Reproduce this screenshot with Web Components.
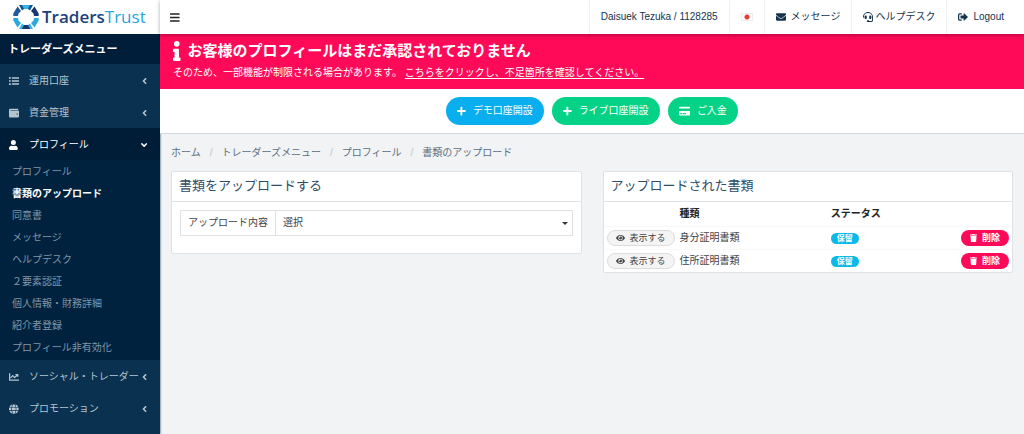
<!DOCTYPE html>
<html lang="ja">
<head>
<meta charset="utf-8">
<meta name="viewport" content="width=device-width, initial-scale=1">
<title>書類のアップロード | TradersTrust</title>
<style>
html, body { margin: 0; min-height: 100%; }
body {
  --navy: #14344f;
  --line: #dde3e7;
  --pink: #ff0a58;
  --green: #04d286;
  --blue: #08aeee;
  background: #f1f3f5;
  font: 10px/16px "Liberation Sans", "Noto Sans CJK JP", sans-serif;
  color: #3c4247;
}
</style>
</head>
<body>
<trader-app></trader-app>

<script>
const ICONS = {
  bars: [448, '<path d="M16 132h416a16 16 0 0 0 16-16V76a16 16 0 0 0-16-16H16A16 16 0 0 0 0 76v40a16 16 0 0 0 16 16zm0 160h416a16 16 0 0 0 16-16v-40a16 16 0 0 0-16-16H16a16 16 0 0 0-16 16v40a16 16 0 0 0 16 16zm0 160h416a16 16 0 0 0 16-16v-40a16 16 0 0 0-16-16H16a16 16 0 0 0-16 16v40a16 16 0 0 0 16 16z"/>'],
  list: [512, '<path d="M0 56h88v88H0zM0 212h88v88H0zM0 368h88v88H0zM144 64h368v72H144zM144 220h368v72H144zM144 376h368v72H144z"/>'],
  wallet: [512, '<path d="M461 128H80a16 16 0 0 1 0-32h384c9 0 16-7 16-16 0-26-22-48-48-48H64C29 32 0 61 0 96v320c0 35 29 64 64 64h397c28 0 51-22 51-48V176c0-26-23-48-51-48zm-45 208a32 32 0 1 1 0-64 32 32 0 0 1 0 64z"/>'],
  user: [448, '<path d="M224 256a128 128 0 1 0 0-256 128 128 0 0 0 0 256zm90 32h-17a174 174 0 0 1-146 0h-17C60 288 0 348 0 422v42c0 27 21 48 48 48h352c27 0 48-21 48-48v-42c0-74-60-134-134-134z"/>'],
  chart: [512, '<path d="M496 384H64V80a16 16 0 0 0-16-16H16A16 16 0 0 0 0 80v336c0 18 14 32 32 32h464a16 16 0 0 0 16-16v-32a16 16 0 0 0-16-16zM464 96H346c-22 0-32 26-17 41l32 32-73 73-73-73c-13-13-33-13-46 0l-96 96c-6 6-6 16 0 23l23 23c6 6 16 6 22 0l74-75 73 73c13 13 33 13 46 0l96-96 32 32c15 15 41 5 41-17V112a16 16 0 0 0-16-16z"/>'],
  globe: [496, '<path d="M336 160C322 66 287 8 248 8s-74 58-88 152zm-184 96c0 22 1 44 3 64h186a690 690 0 0 0 0-128H155c-2 20-3 42-3 64zm325-96A249 249 0 0 0 315 17c25 34 43 87 52 143zM181 17A248 248 0 0 0 19 160h110c9-56 27-109 52-143zm306 175H372a700 700 0 0 1 0 128h115a247 247 0 0 0 0-128zM120 256c0-22 1-43 4-64H9a249 249 0 0 0 0 128h115c-3-21-4-42-4-64zm40 96c14 94 49 152 88 152s74-58 88-152zm155 143a248 248 0 0 0 162-143H367c-9 56-27 109-52 143zM19 352a249 249 0 0 0 162 143c-25-34-43-87-52-143z"/>'],
  left: [256, '<path d="M32 239 168 103c9-9 24-9 34 0l22 23c10 9 10 24 0 34l-96 96 96 96c10 10 10 25 0 34l-22 23c-10 9-25 9-34 0L32 273c-10-9-10-24 0-34z"/>'],
  down: [320, '<path d="M143 352 7 217c-9-10-9-25 0-34l23-23c9-9 24-9 34 0l96 97 96-97c10-9 25-9 34 0l23 23c9 9 9 24 0 34L177 352c-9 10-24 10-34 0z"/>'],
  info: [192, '<path d="M20 424h20V280H20c-11 0-20-9-20-20v-44c0-11 9-20 20-20h112c11 0 20 9 20 20v208h20c11 0 20 9 20 20v48c0 11-9 20-20 20H20c-11 0-20-9-20-20v-48c0-11 9-20 20-20zM96 0a72 72 0 1 0 0 144A72 72 0 0 0 96 0z"/>'],
  plus: [448, '<path d="M416 208H272V64c0-18-14-32-32-32h-32c-18 0-32 14-32 32v144H32c-18 0-32 14-32 32v32c0 18 14 32 32 32h144v144c0 18 14 32 32 32h32c18 0 32-14 32-32V304h144c18 0 32-14 32-32v-32c0-18-14-32-32-32z"/>'],
  card: [576, '<path d="M0 432c0 27 22 48 48 48h480c27 0 48-21 48-48V256H0zm192-68c0-7 5-12 12-12h136c7 0 12 5 12 12v40c0 7-5 12-12 12H204c-7 0-12-5-12-12zm-128 0c0-7 5-12 12-12h72c7 0 12 5 12 12v40c0 7-5 12-12 12H76c-7 0-12-5-12-12zM576 80v48H0V80c0-26 22-48 48-48h480c27 0 48 22 48 48z"/>'],
  eye: [576, '<path d="M573 241C518 136 411 64 288 64S58 136 3 241a32 32 0 0 0 0 30c55 105 162 177 285 177s230-72 285-177a32 32 0 0 0 0-30zM288 400a144 144 0 1 1 0-288 144 144 0 0 1 0 288zm0-240a95 95 0 0 0-25 4 48 48 0 0 1-67 67 96 96 0 1 0 92-71z"/>'],
  trash: [448, '<path d="M432 32H312l-9-19a24 24 0 0 0-22-13H167a24 24 0 0 0-21 13l-10 19H16A16 16 0 0 0 0 48v32a16 16 0 0 0 16 16h416a16 16 0 0 0 16-16V48a16 16 0 0 0-16-16zM32 128h384l-21 339a48 48 0 0 1-48 45H101a48 48 0 0 1-48-45z"/>'],
  mail: [512, '<path d="M502 191c4-3 10 0 10 5v204c0 27-21 48-48 48H48c-26 0-48-21-48-48V196c0-5 6-8 10-5 22 17 52 40 155 114 21 16 57 48 91 48s71-33 92-48c102-75 132-97 154-114zM256 320c23 0 57-29 74-41 133-97 143-105 173-129 6-4 9-11 9-19V112c0-26-21-48-48-48H48c-26 0-48 22-48 48v19c0 8 3 15 9 19 31 24 41 32 174 129 16 12 50 41 73 41z"/>'],
  headset: [512, '<path d="M192 208c0-18-14-32-32-32h-16c-35 0-64 29-64 64v48c0 35 29 64 64 64h16c18 0 32-14 32-32zm176 144c35 0 64-29 64-64v-48c0-35-29-64-64-64h-16c-18 0-32 14-32 32v112c0 18 14 32 32 32zM256 0C113 0 5 119 0 256v16a16 16 0 0 0 16 16h16a16 16 0 0 0 16-16v-16a208 208 0 0 1 416 0v166c0 23-19 42-42 42H320c0-27-21-48-48-48h-32a48 48 0 1 0 0 96h182c50 0 90-40 90-90V256C507 119 399 0 256 0z"/>'],
  logout: [512, '<path d="m497 273-168 168c-15 15-41 5-41-17v-96H152c-13 0-24-11-24-24v-96c0-13 11-24 24-24h136V88c0-21 26-32 41-17l168 168c9 9 9 25 0 34zM192 436v-40c0-7-5-12-12-12H96c-18 0-32-14-32-32V160c0-18 14-32 32-32h84c7 0 12-5 12-12V76c0-7-5-12-12-12H96c-53 0-96 43-96 96v192c0 53 43 96 96 96h84c7 0 12-5 12-12z"/>']
};

function define(name, html, setup) {
  const template = document.createElement('template');
  template.innerHTML = html;
  customElements.define(name, class extends HTMLElement {
    constructor() {
      super();
      this.attachShadow({ mode: 'open' }).append(template.content.cloneNode(true));
    }
    connectedCallback() { if (setup) setup(this, this.shadowRoot); }
  });
}

define('fa-icon', `
<style>
:host { display: inline-flex; flex: none; height: var(--icon, 10px); }
svg { display: block; height: 100%; width: auto; fill: currentColor; }
</style><svg aria-hidden="true"></svg>`, (host, root) => {
  const [w, body] = ICONS[host.getAttribute('name')];
  const svg = root.querySelector('svg');
  svg.setAttribute('viewBox', `0 0 ${w} 512`);
  svg.innerHTML = body;
});

define('brand-logo', `
<style>
:host { display: block; background: #fff; }
a { display: flex; align-items: center; gap: 3px; height: 34px; padding-left: 13px; color: #1d3f7d; text-decoration: none; font: 600 17px/24px "Open Sans", sans-serif; }
svg { flex: none; }
span span { color: #26a5dd; font-weight: 400; }
</style>
<a href="#"><svg width="26" height="26" viewBox="-13 -13 26 26" aria-hidden="true">
<path fill="#1f4f93" d="M-7-12H7L4-6.500 2-8h-4l-2 1.500z"/>
<path fill="#35b3e6" d="M-4-12H4L2-8h-4z"/>
<path fill="#17386f" d="M8.500-10.500 12.700-3.500V-1H8L7.500-3.500 5-6z"/>
<path fill="#2ba9df" d="M12.700 1v2.500L8.500 10.500 5 6 7.500 3.500 8 1z"/>
<path fill="#35b3e6" d="M-7 12H7L4 6.500 2 8h-4l-2-1.500z"/>
<path fill="#17386f" d="M-4 12H4L2 8h-4z"/>
<path fill="#2ba9df" d="M-12.700 1v2.500L-8.500 10.500-5 6-7.500 3.500-8 1z"/>
<path fill="#1f5a9f" d="M-8.500-10.500-12.700-3.500V-1H-8l.500-2.500L-5-6z"/>
</svg><span>Traders<span>Trust</span></span></a>`);

define('top-link', `
<style>
:host { display: flex; border-left: 1px solid #eef1f3; }
a { display: flex; align-items: center; gap: var(--gap, 5px); padding: 0 11px; color: #14344f; text-decoration: none; }
</style><a href="#"><slot></slot></a>`);

define('top-bar', `
<style>
:host { display: flex; height: 34px; background: #fff; color: #222; position: relative; box-shadow: 0 1px 4px #0005; }
button { border: 0; background: none; padding: 0 10px; color: inherit; display: flex; align-items: center; --icon: 11px; }
nav { display: flex; margin-left: auto; padding-right: 9px; }
.flag { width: 12px; height: 8px; display: block; background: radial-gradient(circle, #e8392f 0 2px, #fff 3px); border: 1px solid #eee; box-sizing: border-box; }
.tight { --gap: 2px; }
</style>
<button type="button" aria-label="メニュー"><fa-icon name="bars"></fa-icon></button>
<nav><top-link>Daisuek Tezuka / 1128285</top-link>
<top-link><span class="flag" role="img" aria-label="日本語"></span></top-link>
<top-link><fa-icon name="mail"></fa-icon>メッセージ</top-link>
<top-link class="tight"><fa-icon name="headset"></fa-icon>ヘルプデスク</top-link>
<top-link><fa-icon name="logout"></fa-icon>Logout</top-link></nav>`);

define('nav-item', `
<style>
:host { display: block; color: #b4c5d1; }
a { display: flex; align-items: center; box-sizing: border-box; height: 32px; padding: 2px 13px 0 9px; color: inherit; text-decoration: none; white-space: nowrap; }
.icon { width: 20px; display: flex; }
.arrow { margin-left: auto; display: flex; }
:host([open]) { background: #01223e; color: #fff; }
:host([open]) a { background: #001d38; }
ul { list-style: none; margin: 0; padding: 1px 0; }
:host(:not([open])) ul { display: none; }
</style>
<a href="#"><span class="icon"></span><span class="label"></span><span class="arrow"></span></a>
<ul><slot></slot></ul>`, (host, root) => {
  root.querySelector('.label').textContent = host.getAttribute('label');
  const [icon, arrow] = ['.icon', '.arrow'].map(s => root.querySelector(s));
  icon.innerHTML = `<fa-icon name="${host.getAttribute('icon')}"></fa-icon>`;
  arrow.innerHTML = `<fa-icon name="${host.hasAttribute('open') ? 'down' : 'left'}"></fa-icon>`;
});

define('sub-item', `
<style>
:host { display: list-item; list-style: none; }
a { display: block; line-height: 22px; padding-left: 12px; color: #7f97a8; text-decoration: none; }
:host([active]) a { color: #fff; font-weight: 700; }
</style><a href="#"><slot></slot></a>`);

define('side-bar', `
<style>
:host { display: block; background: #0a314f; }
h2 { margin: 0; padding: 0 8px; font-size: 11px; line-height: 30px; color: #fff; background: #001d3a; }
</style>
<brand-logo></brand-logo>
<h2>トレーダーズメニュー</h2>
<nav>
<nav-item icon="list" label="運用口座"></nav-item>
<nav-item icon="wallet" label="資金管理"></nav-item>
<nav-item icon="user" label="プロフィール" open>
<sub-item>プロフィール</sub-item><sub-item active>書類のアップロード</sub-item><sub-item>同意書</sub-item><sub-item>メッセージ</sub-item><sub-item>ヘルプデスク</sub-item><sub-item>２要素認証</sub-item><sub-item>個人情報・財務詳細</sub-item><sub-item>紹介者登録</sub-item><sub-item>プロフィール非有効化</sub-item>
</nav-item>
<nav-item icon="chart" label="ソーシャル・トレーダー"></nav-item>
<nav-item icon="globe" label="プロモーション"></nav-item>
</nav>`);

define('alert-banner', `
<style>
:host { display: block; background: var(--pink); color: #fff; padding: 5px 13px 6px; }
h1 { display: flex; align-items: center; gap: 7px; margin: 0; font-size: 15px; line-height: 24px; --icon: 20px; }
p { margin: 0; line-height: 20px; }
a { color: inherit; text-underline-offset: 2px; }
</style>
<h1><fa-icon name="info"></fa-icon>お客様のプロフィールはまだ承認されておりません</h1>
<p>そのため、一部機能が制限される場合があります。 <a href="#">こちらをクリックし、不足箇所を確認してください。</a></p>`);

define('pill-button', `
<style>
:host { display: inline-flex; }
button { display: flex; align-items: center; gap: 5px; height: 28px; padding: 0 11px; border: 0; border-radius: 14px; background: var(--green); color: #fff; font: inherit; white-space: nowrap; }
:host([kind=blue]) button { background: var(--blue); }
:host([small]) button { height: 16px; padding: 0 9px; gap: 5px; font-size: 9px; line-height: 14px; --icon: 8px; }
:host([kind=danger]) button { background: var(--pink); font-weight: 700; }
:host([kind=light]) button { background: #f4f4f4; border: 1px solid #dcdcdc; color: #444; padding: 0 8px; }
</style><button type="button"><slot></slot></button>`);

define('action-bar', `
<style>
:host { display: flex; justify-content: center; gap: 8px; padding: 8px; background: #fff; border-bottom: 1px solid #d3d7da; }
pill-button span { padding-left: 2px; }
</style>
<pill-button kind="blue"><fa-icon name="plus"></fa-icon><span>デモ口座開設</span></pill-button>
<pill-button><fa-icon name="plus"></fa-icon><span>ライブ口座開設</span></pill-button>
<pill-button><fa-icon name="card"></fa-icon><span>ご入金</span></pill-button>`);

define('bread-crumb', `
<style>
:host { display: block; }
ol { display: flex; margin: 0; padding: 11px 11px 10px; list-style: none; color: #5b6f7f; }
a { color: inherit; text-decoration: none; }
li + li::before { content: "/"; padding: 0 9px; color: #bcc4ca; }
</style>
<nav aria-label="パンくず"><ol><li><a href="#">ホーム</a></li><li><a href="#">トレーダーズメニュー</a></li><li><a href="#">プロフィール</a></li><li aria-current="page">書類のアップロード</li></ol></nav>`);

define('card-panel', `
<style>
:host { display: block; background: #fff; border: 1px solid var(--line); border-radius: 2px; }
header { padding: 0 7px 1px; border-bottom: 1px solid var(--line); }
::slotted(h2) { margin: 0; font-size: 13px; line-height: 28px; font-weight: 400; color: #2d4c66; }
</style><header><slot name="title"></slot></header><slot></slot>`);

define('upload-form', `
<style>
:host { display: block; padding: 8px 8px 17px; }
form { display: flex; border: 1px solid #dfe1e3; }
label { padding: 0 7px; line-height: 24px; border-right: 1px solid #dfe1e3; }
.field { flex: 1; display: flex; align-items: center; padding-right: 4px; }
select { flex: 1; appearance: none; border: 0; background: none; padding: 0 7px; height: 24px; font: inherit; color: inherit; }
.field::after { content: ""; border: 3px solid transparent; border-top-color: #333; border-bottom: 0; }
</style>
<form><label for="kind">アップロード内容</label><div class="field"><select id="kind"><option>選択</option></select></div></form>`);

define('document-table', `
<style>
:host { display: block; }
table { width: 100%; border-collapse: collapse; table-layout: fixed; }
th { height: 24px; text-align: left; color: #222; }
th, td { padding: 0 3px; }
td { height: 22px; }
td:last-child { text-align: right; }
tbody tr { border-top: 1px solid #f8f8f8; }
.view { width: 73px; }
.type { width: 37%; }
.del { width: 60px; }
pill-button { vertical-align: top; }
mark { display: inline-block; background: #0bb9e8; color: #fff; font-size: 8px; line-height: 11px; font-weight: 700; padding: 0 6px; border-radius: 6px; vertical-align: middle; }
</style>
<table><colgroup><col class="view"><col class="type"><col><col class="del"></colgroup>
<thead><tr><td></td><th scope="col">種類</th><th scope="col">ステータス</th><td></td></tr></thead>
<tbody>
<tr><td><pill-button small kind="light"><fa-icon name="eye"></fa-icon>表示する</pill-button></td><td>身分証明書類</td><td><mark>保留</mark></td><td><pill-button small kind="danger"><fa-icon name="trash"></fa-icon>削除</pill-button></td></tr>
<tr><td><pill-button small kind="light"><fa-icon name="eye"></fa-icon>表示する</pill-button></td><td>住所証明書類</td><td><mark>保留</mark></td><td><pill-button small kind="danger"><fa-icon name="trash"></fa-icon>削除</pill-button></td></tr>
</tbody></table>`);

define('trader-app', `
<style>
:host { display: grid; grid-template-columns: 160px minmax(0, 1fr); min-height: 100vh; }
side-bar { box-shadow: 0 0 2px #0a314f; }
.cards { display: grid; grid-template-columns: 1fr 1fr; gap: 21px; align-items: start; padding: 0 11px 11px; }
</style>
<side-bar></side-bar>
<div>
<top-bar></top-bar>
<main>
<alert-banner></alert-banner>
<action-bar></action-bar>
<bread-crumb></bread-crumb>
<div class="cards">
<card-panel><h2 slot="title">書類をアップロードする</h2><upload-form></upload-form></card-panel>
<card-panel><h2 slot="title">アップロードされた書類</h2><document-table></document-table></card-panel>
</div>
</main>
</div>`);
</script>
</body>
</html>
